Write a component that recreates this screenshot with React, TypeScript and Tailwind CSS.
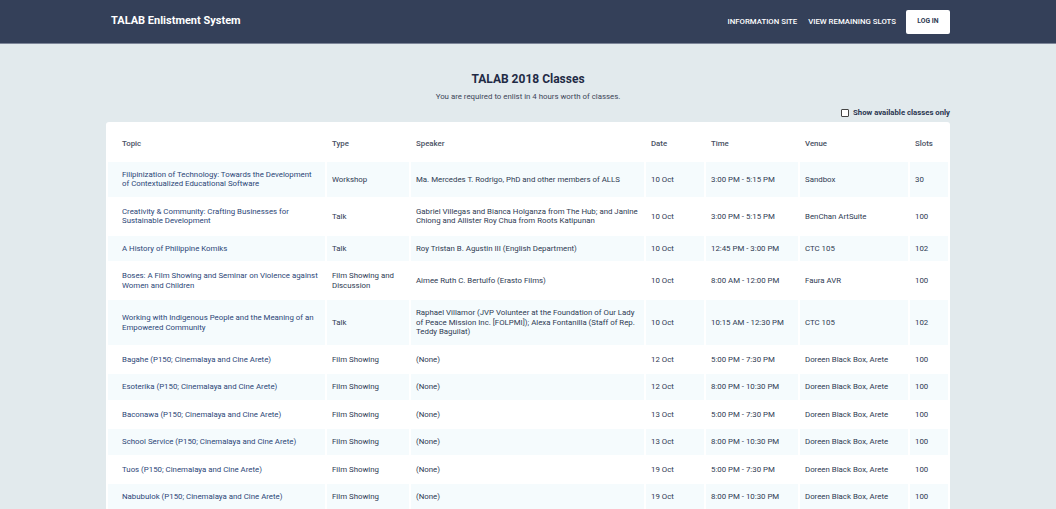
import React from "react";

type Row = {
  topic: string;
  type: string;
  speaker: string;
  date: string;
  time: string;
  venue: string;
  slots: string;
};

const rows: Row[] = [
  {
    topic: "Filipinization of Technology: Towards the Development of Contextualized Educational Software",
    type: "Workshop",
    speaker: "Ma. Mercedes T. Rodrigo, PhD and other members of ALLS",
    date: "10 Oct",
    time: "3:00 PM - 5:15 PM",
    venue: "Sandbox",
    slots: "30",
  },
  {
    topic: "Creativity & Community: Crafting Businesses for Sustainable Development",
    type: "Talk",
    speaker:
      "Gabriel Villegas and Bianca Holganza from The Hub; and Janine Chiong and Allister Roy Chua from Roots Katipunan",
    date: "10 Oct",
    time: "3:00 PM - 5:15 PM",
    venue: "BenChan ArtSuite",
    slots: "100",
  },
  {
    topic: "A History of Philippine Komiks",
    type: "Talk",
    speaker: "Roy Tristan B. Agustin III (English Department)",
    date: "10 Oct",
    time: "12:45 PM - 3:00 PM",
    venue: "CTC 105",
    slots: "102",
  },
  {
    topic: "Boses: A Film Showing and Seminar on Violence against Women and Children",
    type: "Film Showing and Discussion",
    speaker: "Aimee Ruth C. Bertulfo (Erasto Films)",
    date: "10 Oct",
    time: "8:00 AM - 12:00 PM",
    venue: "Faura AVR",
    slots: "100",
  },
  {
    topic: "Working with Indigenous People and the Meaning of an Empowered Community",
    type: "Talk",
    speaker:
      "Raphael Villamor (JVP Volunteer at the Foundation of Our Lady of Peace Mission Inc. [FOLPMI]); Alexa Fontanilla (Staff of Rep. Teddy Baguilat)",
    date: "10 Oct",
    time: "10:15 AM - 12:30 PM",
    venue: "CTC 105",
    slots: "102",
  },
  {
    topic: "Bagahe (P150; Cinemalaya and Cine Arete)",
    type: "Film Showing",
    speaker: "(None)",
    date: "12 Oct",
    time: "5:00 PM - 7:30 PM",
    venue: "Doreen Black Box, Arete",
    slots: "100",
  },
  {
    topic: "Esoterika (P150; Cinemalaya and Cine Arete)",
    type: "Film Showing",
    speaker: "(None)",
    date: "12 Oct",
    time: "8:00 PM - 10:30 PM",
    venue: "Doreen Black Box, Arete",
    slots: "100",
  },
  {
    topic: "Baconawa (P150; Cinemalaya and Cine Arete)",
    type: "Film Showing",
    speaker: "(None)",
    date: "13 Oct",
    time: "5:00 PM - 7:30 PM",
    venue: "Doreen Black Box, Arete",
    slots: "100",
  },
  {
    topic: "School Service (P150; Cinemalaya and Cine Arete)",
    type: "Film Showing",
    speaker: "(None)",
    date: "13 Oct",
    time: "8:00 PM - 10:30 PM",
    venue: "Doreen Black Box, Arete",
    slots: "100",
  },
  {
    topic: "Tuos (P150; Cinemalaya and Cine Arete)",
    type: "Film Showing",
    speaker: "(None)",
    date: "19 Oct",
    time: "5:00 PM - 7:30 PM",
    venue: "Doreen Black Box, Arete",
    slots: "100",
  },
  {
    topic: "Nabubulok (P150; Cinemalaya and Cine Arete)",
    type: "Film Showing",
    speaker: "(None)",
    date: "19 Oct",
    time: "8:00 PM - 10:30 PM",
    venue: "Doreen Black Box, Arete",
    slots: "100",
  },
];

const cell = "px-[5px] py-[8px] align-middle";

export default function App() {
  return (
    <div className="min-h-screen bg-[#e2eaed] font-['Roboto',sans-serif] text-[#2e3a52]">
      {/* Navbar */}
      <header className="h-[44px] bg-[#344059] border-b border-[#7d8699]">
        <div className="flex h-full items-center justify-between pl-[111px] pr-[106px]">
          <span className="text-[11px] font-bold text-white">TALAB Enlistment System</span>
          <nav className="flex items-center text-[7.8px] font-medium uppercase text-white">
            <a className="mr-[11px]">Information Site</a>
            <a className="mr-[10px]">View Remaining Slots</a>
            <button className="h-[24px] w-[44px] rounded-[2px] bg-white text-[6.8px] font-bold text-[#2e3a52]">
              LOG IN
            </button>
          </nav>
        </div>
      </header>

      <main className="mx-auto w-[844px] pt-[26px]">
        <h1 className="text-center text-[12px] font-bold text-[#1f2b45]">TALAB 2018 Classes</h1>
        <p className="mt-[3px] text-center text-[7.85px] text-[#3e4658]">
          You are required to enlist in 4 hours worth of classes.
        </p>

        <label className="mt-[4px] flex items-center justify-end gap-[4px] text-[7.75px] font-bold text-[#2b3650]">
          <span className="h-[8px] w-[8px] rounded-[1px] border border-[#444] bg-white" />
          Show available classes only
        </label>

        <div className="mt-[4px] rounded-[3px] bg-white pt-[7px]">
          <table className="w-full border-separate border-spacing-x-[2px] border-spacing-y-[2px] text-left text-[7.85px] leading-[9.5px]">
            <colgroup>
              <col className="w-[217px]" />
              <col className="w-[82px]" />
              <col className="w-[233px]" />
              <col className="w-[58px]" />
              <col className="w-[92px]" />
              <col className="w-[108px]" />
              <col />
            </colgroup>
            <thead>
              <tr className="text-[#4a5264]">
                <th className={`${cell} pl-[14px] pb-[11px] font-medium`}>Topic</th>
                <th className={`${cell} pb-[11px] font-medium`}>Type</th>
                <th className={`${cell} pb-[11px] font-medium`}>Speaker</th>
                <th className={`${cell} pb-[11px] font-medium`}>Date</th>
                <th className={`${cell} pb-[11px] font-medium`}>Time</th>
                <th className={`${cell} pb-[11px] font-medium`}>Venue</th>
                <th className={`${cell} pb-[11px] font-medium`}>Slots</th>
              </tr>
            </thead>
            <tbody>
              {rows.map((r, i) => {
                const bg = i % 2 === 0 ? "bg-[#f5fbfd]" : "bg-white";
                return (
                  <tr key={r.topic} className="text-[#2e3a52]">
                    <td className={`${cell} ${bg} pl-[14px] text-[#2c4677]`}>{r.topic}</td>
                    <td className={`${cell} ${bg}`}>{r.type}</td>
                    <td className={`${cell} ${bg}`}>{r.speaker}</td>
                    <td className={`${cell} ${bg}`}>{r.date}</td>
                    <td className={`${cell} ${bg}`}>{r.time}</td>
                    <td className={`${cell} ${bg}`}>{r.venue}</td>
                    <td className={`${cell} ${bg}`}>{r.slots}</td>
                  </tr>
                );
              })}
            </tbody>
          </table>
        </div>
      </main>
    </div>
  );
}
